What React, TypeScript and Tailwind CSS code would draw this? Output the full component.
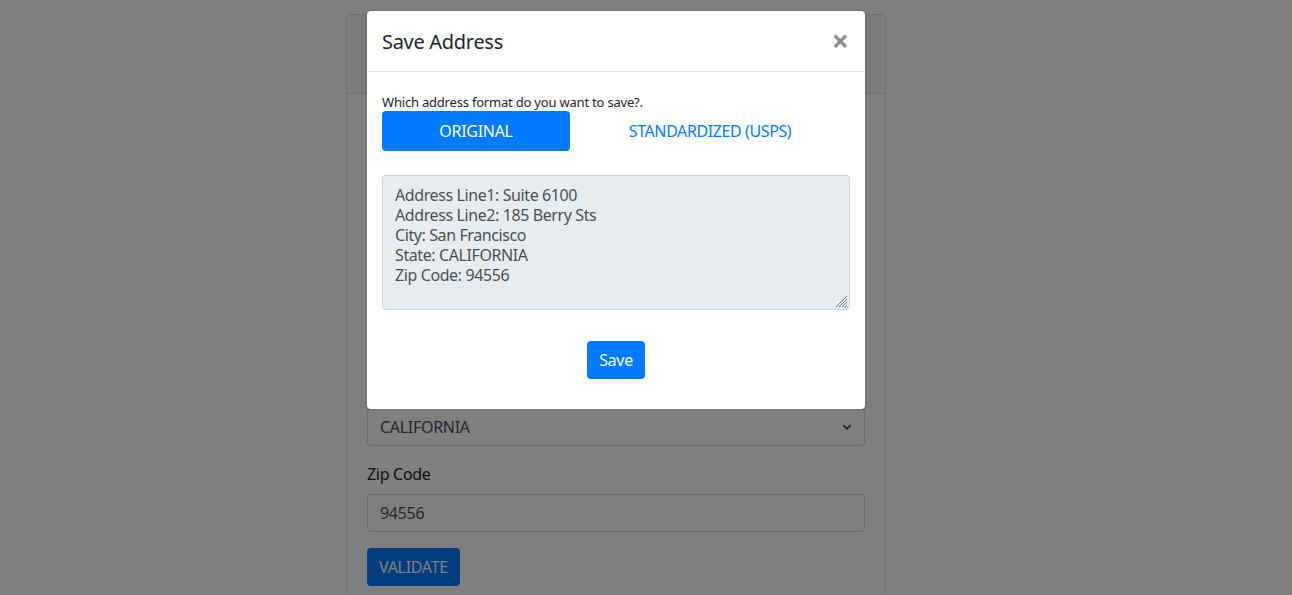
import React from "react";

const font = { fontFamily: '"Noto Sans", "Open Sans", sans-serif' };

function Field({ label, value, select }: { label: string; value: string; select?: boolean }) {
  return (
    <div className="mb-4">
      <div className="mb-2 h-6 text-[16px] leading-6 tracking-[-0.3px] text-[#212529]">{label}</div>
      <div className="flex h-[38px] items-center justify-between rounded border border-[#ced4da] bg-white px-3 text-[16px] tracking-[-0.3px] text-[#495057]">
        <span>{value}</span>
        {select && (
          <svg width="10" height="10" viewBox="0 0 16 16" fill="none" stroke="#343a40" strokeWidth="2.5">
            <path d="M2 5l6 6 6-6" />
          </svg>
        )}
      </div>
    </div>
  );
}

export default function App() {
  return (
    <div className="relative h-[595px] w-[1292px] overflow-hidden bg-white" style={font}>
      {/* background page */}
      <div className="ml-[346px] mt-[14px] w-[540px] rounded border border-[#dfdfdf] bg-white">
        <div className="h-[79px] border-b border-[#dfdfdf] bg-[#f7f7f7]" />
        <div className="px-5 pt-[24px]">
          <Field label="Address Line1" value="Suite 6100" />
          <Field label="Address Line2" value="185 Berry Sts" />
          <Field label="City" value="San Francisco" />
          <Field label="State" value="CALIFORNIA" select />
          <Field label="Zip Code" value="94556" />
          <button className="h-[38px] rounded bg-[#007bff] px-3 text-[16px] tracking-[-0.3px] text-white">VALIDATE</button>
          <div className="h-10" />
        </div>
      </div>

      {/* backdrop */}
      <div className="absolute inset-0 bg-black/50" />

      {/* modal */}
      <div className="absolute left-[367px] top-[11px] w-[498px] rounded bg-white shadow-[0_0_2px_rgba(0,0,0,0.3)]">
        <div className="flex h-[61px] items-center justify-between border-b border-[#dee2e6] px-[15px]">
          <div className="pt-[2px] text-[20px] font-normal leading-[24px] tracking-[-0.3px] text-[#212529]">Save Address</div>
          <div className="mr-[1px] text-[30px] font-bold leading-none text-[#8a8a8a]">×</div>
        </div>
        <div className="px-[15px] pt-[22px] pb-[30px]">
          <div className="text-[13px] leading-[16px] tracking-[-0.2px] text-[#212529]">Which address format do you want to save?.</div>
          <div className="mt-[1px] flex">
            <div className="flex h-10 w-[188px] items-center justify-center rounded bg-[#007bff] text-[16px] tracking-[-0.3px] text-white">ORIGINAL</div>
            <div className="flex h-10 flex-1 items-center justify-center text-[16px] tracking-[-0.4px] text-[#007bff]">STANDARDIZED (USPS)</div>
          </div>
          <div className="relative mt-6 h-[135px] rounded border border-[#ced4da] bg-[#e9ecef] px-3 pt-[9px] text-[16px] leading-[20px] tracking-[-0.4px] text-[#495057]">
            <div>Address Line1: Suite 6100</div>
            <div>Address Line2: 185 Berry Sts</div>
            <div>City: San Francisco</div>
            <div>State: CALIFORNIA</div>
            <div>Zip Code: 94556</div>
            <svg className="absolute bottom-[1px] right-[1px]" width="14" height="14" viewBox="0 0 14 14" stroke="#777" strokeWidth="1">
              <path d="M13 2L2 13M13 5L5 13M13 8L8 13M13 11L11 13" />
            </svg>
          </div>
          <div className="mt-[31px] flex justify-center">
            <button className="h-[38px] rounded bg-[#007bff] px-3 text-[16px] tracking-[-0.3px] text-white">Save</button>
          </div>
        </div>
      </div>
    </div>
  );
}
